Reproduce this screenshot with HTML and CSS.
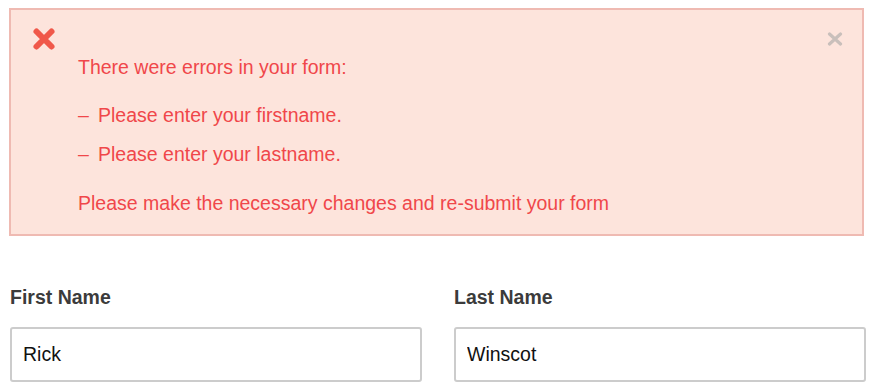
FILE: index.html
```html
<!DOCTYPE html>
<html>
<head>
<meta charset="utf-8">
<link rel="stylesheet" href="styles.css">
</head>
<body>
<div class="alert">
  <svg class="alert-icon" viewBox="0 0 24 24" width="24" height="24">
    <path d="M4.5 4.5 L19.5 19.5 M19.5 4.5 L4.5 19.5" stroke="#f0584a" stroke-width="6" stroke-linecap="round" fill="none"/>
  </svg>
  <div class="alert-body">
    <p class="alert-title">There were errors in your form:</p>
    <ul class="alert-list">
      <li><span class="dash">–</span>Please enter your firstname.</li>
      <li><span class="dash">–</span>Please enter your lastname.</li>
    </ul>
    <p class="alert-foot">Please make the necessary changes and re-submit your form</p>
  </div>
  <svg class="alert-close" viewBox="0 0 16 14" width="16" height="14">
    <path d="M2.5 2 L13.5 12 M13.5 2 L2.5 12" stroke="#c9bfbb" stroke-width="3.2" stroke-linecap="round" fill="none"/>
  </svg>
</div>
<form class="form">
  <div class="field">
    <label class="label">First Name</label>
    <input class="input" type="text" value="Rick">
  </div>
  <div class="field">
    <label class="label">Last Name</label>
    <input class="input" type="text" value="Winscot">
  </div>
</form>
</body>
</html>
```
FILE: styles.css
```css
* { box-sizing: border-box; }
body {
  margin: 0;
  background: #fff;
  font-family: "Liberation Sans", Arial, sans-serif;
  font-size: 19.5px;
}
.alert {
  position: relative;
  display: flex;
  margin: 8px 0 0 9px;
  width: 855px;
  padding: 17px 0 18px 21px;
  background: #fde4dc;
  border: 2px solid #efbab2;
  color: #f0474a;
}
.alert-icon { flex: none; display: block; }
.alert-body {
  margin-left: 22px;
  padding-top: 27px;
}
.alert-title, .alert-foot {
  margin: 0;
  line-height: 26px;
}
.alert-list {
  list-style: none;
  margin: 22px 0 0;
  padding: 0;
}
.alert-list li {
  line-height: 26px;
  margin-bottom: 13px;
}
.alert-list li:last-child { margin-bottom: 23px; }
.dash { display: inline-block; width: 20px; }
.alert-close {
  position: absolute;
  top: 22px;
  right: 19px;
}
.form {
  display: grid;
  grid-template-columns: 412px 412px;
  column-gap: 32px;
  margin: 48px 0 0 10px;
}
.field { display: flex; flex-direction: column; }
.label {
  font-weight: bold;
  color: #3b3b3b;
  line-height: 26px;
  margin-bottom: 17px;
}
.input {
  height: 55px;
  border: 2px solid #cccccc;
  border-radius: 3px;
  padding: 0 11px;
  font-family: "Liberation Sans", Arial, sans-serif;
  font-size: 19.5px;
  color: #111;
  background: #fff;
  outline: none;
}
```
